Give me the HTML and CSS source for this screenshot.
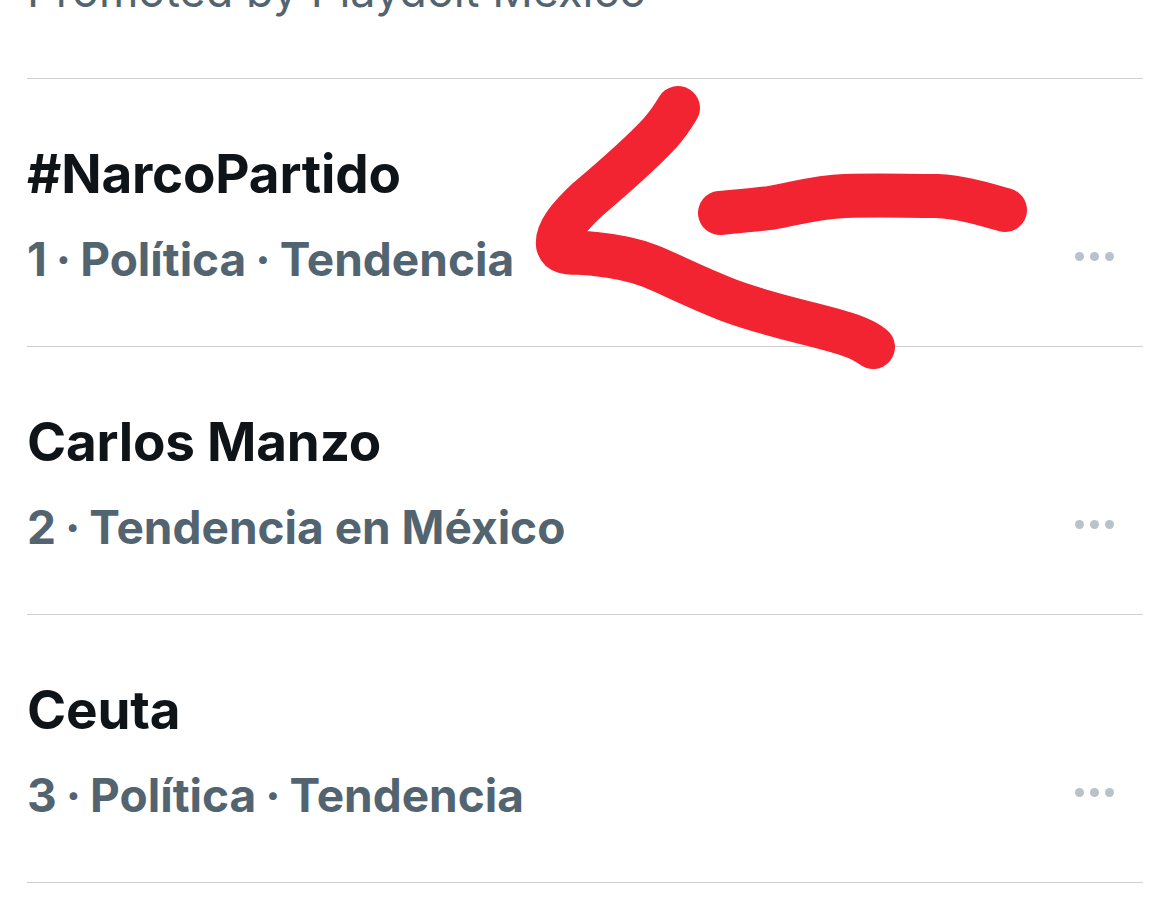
FILE: index.html
```html
<!DOCTYPE html>
<html>
<head>
    <title>Tendencias</title>
    <link rel="stylesheet" href="styles.css">
</head>
<body>
    <div class="trends">
        <div class="promoted">Promoted by Playdoit México</div>

        <div class="trend">
            <div class="trend-title">#NarcoPartido</div>
            <div class="trend-meta">
                <span>1<span class="sep">·</span>Política<span class="sep">·</span>Tendencia</span>
                <span class="more"><i></i><i></i><i></i></span>
            </div>
        </div>

        <div class="trend">
            <div class="trend-title">Carlos Manzo</div>
            <div class="trend-meta">
                <span>2<span class="sep">·</span>Tendencia en México</span>
                <span class="more"><i></i><i></i><i></i></span>
            </div>
        </div>

        <div class="trend">
            <div class="trend-title">Ceuta</div>
            <div class="trend-meta">
                <span>3<span class="sep">·</span>Política<span class="sep">·</span>Tendencia</span>
                <span class="more"><i></i><i></i><i></i></span>
            </div>
        </div>
    </div>

    <!-- hand drawn arrow on top of the screenshot -->
    <svg class="scribble" width="1170" height="907" viewBox="0 0 1170 907">
        <path d="M678 108 C672 118 668 124 660 133 C648 146 620 172 587 200 C570 216 556 232 558 245 C561 256 575 251 595 254 C615 256 632 259 650 266 C668 273 690 285 728 300 C760 312 787 318 818 326 C845 333 862 338 873 347" />
        <path d="M720 213 C740 211 755 210 770 208 C795 204 815 197 845 196 C880 195 905 196 937 196 C960 197 980 203 1005 210" />
    </svg>
</body>
</html>
```

FILE: styles.css
```css
html, body {
    margin: 0;
    padding: 0;
    background-color: #fff;
}

body {
    width: 1170px;
    height: 907px;
    overflow: hidden;
    position: relative;
    font-family: "Inter", "Liberation Sans", sans-serif;
}

.trends {
    margin: 0 27px;
}

.promoted {
    margin-top: -39px;
    padding-bottom: 57px;
    border-bottom: 1px solid #cfcfcf;
    color: #536471;
    font-size: 45px;
    line-height: 60px;
}

.trend {
    padding-top: 65px;
    padding-bottom: 57px;
    border-bottom: 1px solid #cfcfcf;
}

.trend-title {
    color: #0f1419;
    font-size: 53px;
    font-weight: 700;
    line-height: 60px;
    letter-spacing: -0.2px;
}

.trend-meta {
    display: flex;
    justify-content: space-between;
    align-items: center;
    margin-top: 25px;
    padding-right: 29px;
    color: #536471;
    font-size: 46px;
    font-weight: 700;
    line-height: 60px;
}

.sep {
    margin: 0 9px;
}

.more {
    display: flex;
    gap: 6px;
    margin-bottom: 6px;
}

.more i {
    width: 9px;
    height: 9px;
    border-radius: 50%;
    background-color: #b9c2ca;
}

.scribble {
    position: absolute;
    top: 0;
    left: 0;
    pointer-events: none;
}

.scribble path {
    fill: none;
    stroke: #f22431;
    stroke-width: 44;
    stroke-linecap: round;
    stroke-linejoin: round;
}
```
